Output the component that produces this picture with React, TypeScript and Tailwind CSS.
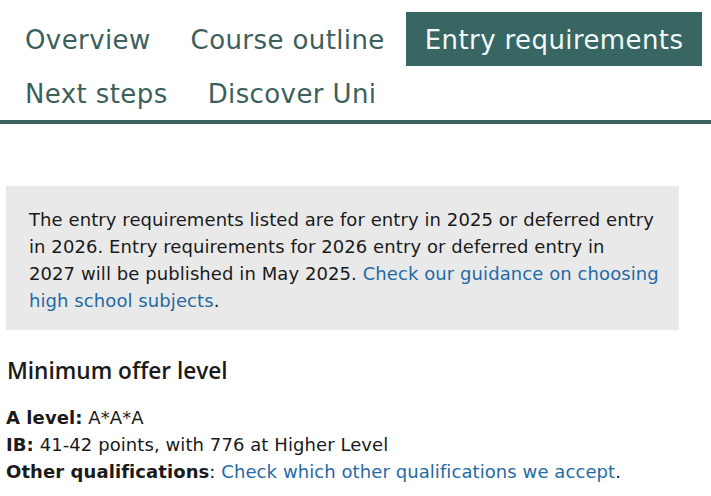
import React from "react";

const tabs = ["Overview", "Course outline", "Entry requirements", "Next steps", "Discover Uni"];

export default function App() {
  return (
    <div className="w-[711px] h-[496px] bg-white overflow-hidden" style={{ fontFamily: '"DejaVu Sans", Verdana, sans-serif' }}>
      <nav className="flex flex-wrap gap-x-[2px] pl-[6px] pt-[12px] border-b-4 border-[#3b625f]">
        {tabs.map((t) => {
          const active = t === "Entry requirements";
          return (
            <div
              key={t}
              className={
                "px-[19px] h-[54px] pt-[2px] leading-[52px] text-[26px] tracking-[0.4px] " +
                (active ? "bg-[#386663] text-[#f2fbf8]" : "text-[#3c5f5c]")
              }
            >
              {t}
            </div>
          );
        })}
      </nav>
      <div className="pl-[6px] pr-[32px] pt-[62px]">
        <div className="bg-[#e9e9e9] pl-[23px] pr-[8px] pt-[20px] pb-[16px] text-[18px] leading-[27px] tracking-[0.08px] text-[#1a1a1a] whitespace-nowrap">
          The entry requirements listed are for entry in 2025 or deferred entry
          <br />
          in 2026. Entry requirements for 2026 entry or deferred entry in
          <br />
          2027 will be published in May 2025. <a className="text-[#246aa6]">Check our guidance on choosing</a>
          <br />
          <a className="text-[#246aa6]">high school subjects</a>.
        </div>
        <h2
          className="mt-[26px] text-[22.6px] font-semibold text-[#1a1a1a] leading-[30px] pl-px"
          style={{ fontFamily: '"Open Sans", sans-serif' }}
        >
          Minimum offer level
        </h2>
        <div className="mt-[18px] text-[18px] leading-[27px] tracking-[0.08px] text-[#1a1a1a]">
          <div>
            <b>A level:</b> A*A*A
          </div>
          <div>
            <b>IB:</b> 41-42 points, with 776 at Higher Level
          </div>
          <div>
            <b>Other qualifications</b>: <a className="text-[#246aa6]">Check which other qualifications we accept</a>.
          </div>
        </div>
      </div>
    </div>
  );
}
